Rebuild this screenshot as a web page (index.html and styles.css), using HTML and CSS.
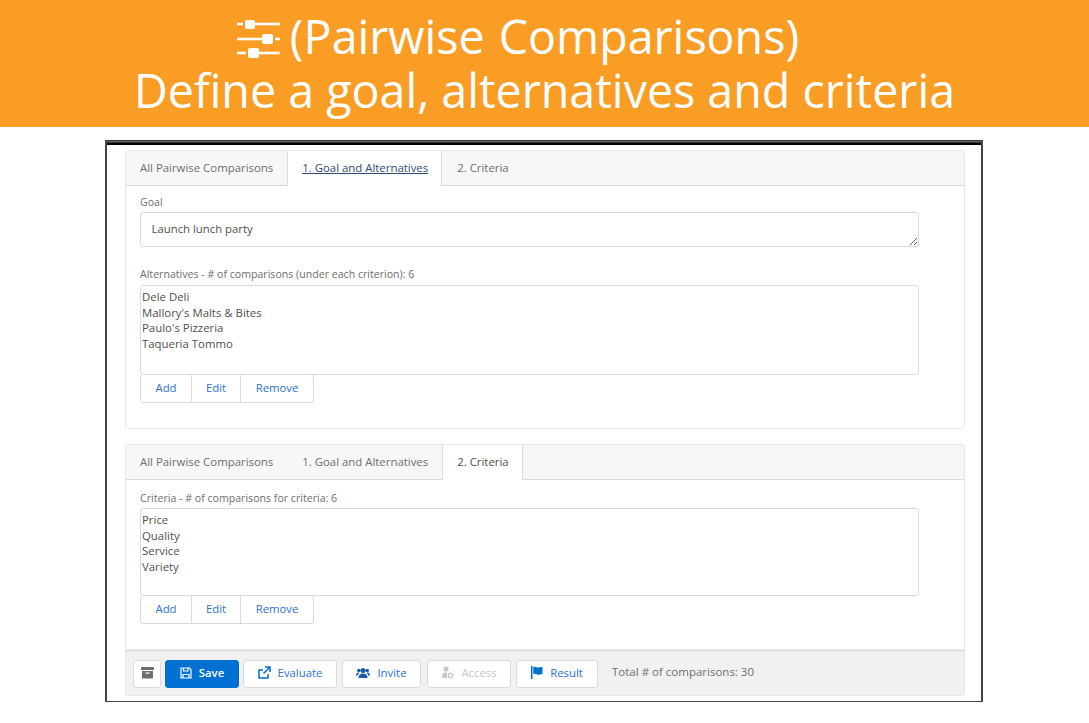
FILE: index.html
```html
<!DOCTYPE html>
<html lang="en">
<head>
<meta charset="utf-8">
<title>Pairwise Comparisons</title>
<link rel="stylesheet" href="styles.css">
</head>
<body>
<header class="banner">
  <div class="banner-line banner-line-first">
    <svg class="banner-icon" viewBox="0 0 44 44" aria-hidden="true">
      <g fill="#fff">
        <rect x="0" y="8.700" width="6" height="2.600"/><rect x="8" y="6" width="10" height="9" rx="2"/><rect x="18" y="8.700" width="25" height="2.600"/>
        <rect x="0" y="23.700" width="25" height="2.600"/><rect x="25" y="20" width="11" height="10" rx="2"/><rect x="38" y="23.700" width="5" height="2.600"/>
        <rect x="0" y="37.700" width="9" height="2.600"/><rect x="11" y="34" width="11" height="10" rx="2"/><rect x="22" y="37.700" width="21" height="2.600"/>
      </g>
    </svg>
    <span class="banner-title">(Pairwise Comparisons)</span>
  </div>
  <div class="banner-line">Define a goal, alternatives and criteria</div>
</header>

<main class="frame">
  <section class="panel panel-first">
    <nav class="tabs">
      <span class="tab">All Pairwise Comparisons</span>
      <span class="tab tab-active tab-link">1. Goal and Alternatives</span>
      <span class="tab">2. Criteria</span>
    </nav>
    <div class="panel-body">
      <label class="field-label label-goal" for="goal">Goal</label>
      <textarea id="goal" class="goal-input" readonly>Launch lunch party</textarea>
      <div class="field-label label-alt">Alternatives - # of comparisons (under each criterion): 6</div>
      <ul class="list list-alt">
        <li>Dele Deli</li>
        <li>Mallory's Malts &amp; Bites</li>
        <li>Paulo's Pizzeria</li>
        <li>Taqueria Tommo</li>
      </ul>
      <div class="btn-group">
        <button class="group-btn btn-add">Add</button>
        <button class="group-btn btn-edit">Edit</button>
        <button class="group-btn btn-remove">Remove</button>
      </div>
    </div>
  </section>

  <section class="panel panel-second">
    <nav class="tabs">
      <span class="tab">All Pairwise Comparisons</span>
      <span class="tab">1. Goal and Alternatives</span>
      <span class="tab tab-active">2. Criteria</span>
    </nav>
    <div class="panel-body panel-body-second">
      <div class="field-label label-crit">Criteria - # of comparisons for criteria: 6</div>
      <ul class="list list-crit">
        <li>Price</li>
        <li>Quality</li>
        <li>Service</li>
        <li>Variety</li>
      </ul>
      <div class="btn-group">
        <button class="group-btn btn-add">Add</button>
        <button class="group-btn btn-edit">Edit</button>
        <button class="group-btn btn-remove">Remove</button>
      </div>
    </div>
    <footer class="toolbar">
      <button class="btn btn-archive" aria-label="Archive">
        <svg width="13" height="13" viewBox="0 0 13 13"><path fill="#706e6b" d="M1 1h11a1 1 0 0 1 1 1v2H0V2a1 1 0 0 1 1-1zM1 5h11v6.500a1 1 0 0 1-1 1H2a1 1 0 0 1-1-1zM4.500 6.500v1.200h4V6.500z"/></svg>
      </button>
      <button class="btn btn-save">
        <svg width="12" height="12" viewBox="0 0 12 12" fill="none" stroke="#fff" stroke-width="1.200"><path d="M1 1h8.500L11 2.500V11H1zM3.500 1v3h4.500V1M3 11V7.500h6V11"/></svg>
        Save
      </button>
      <button class="btn btn-evaluate">
        <svg width="13" height="13" viewBox="0 0 13 13" fill="none" stroke="#0070d2" stroke-width="1.500"><path d="M10 8v4H1V4h4M7 1h5v5M12 1 5.500 7.500"/></svg>
        Evaluate
      </button>
      <button class="btn btn-invite">
        <svg width="14" height="12" viewBox="0 0 14 12"><g fill="#1a5aa8"><circle cx="7" cy="3.500" r="2.500"/><path d="M2.500 11c0-3 1.500-4.500 4.500-4.500s4.500 1.500 4.500 4.500z"/><circle cx="2.800" cy="3.500" r="1.800"/><circle cx="11.200" cy="3.500" r="1.800"/><path d="M0 8.500c0-2 1-3 2.800-3l.7.300C2.500 6.800 2 7.800 1.800 8.500zM14 8.500c0-2-1-3-2.800-3l-.7.300c1 1 1.500 2 1.700 2.700z"/></g></svg>
        Invite
      </button>
      <button class="btn btn-access">
        <svg width="13" height="13" viewBox="0 0 13 13"><g fill="#c9c7c5"><circle cx="5" cy="3" r="2.600"/><path d="M1 12c0-4 1-5.500 4-5.500l1 .3V12z"/></g><circle cx="9.500" cy="9.500" r="2.200" fill="none" stroke="#c9c7c5" stroke-width="1.300"/></svg>
        Access
      </button>
      <button class="btn btn-result">
        <svg width="12" height="13" viewBox="0 0 12 13"><path fill="#0070d2" d="M0 0h1.500v13H0zM2.300 1c2-1 3.700.6 5 .6 1.300 0 2.700-.3 4.200-.8v7c-1.500.6-3 1-4.300 1-1.300 0-3-1.500-4.900-.7z"/></svg>
        Result
      </button>
      <span class="total">Total # of comparisons: 30</span>
    </footer>
  </section>
</main>
</body>
</html>
```
FILE: styles.css
```css
* { box-sizing: border-box; }

html, body { margin: 0; padding: 0; background: #fff; }

body {
  width: 1089px;
  height: 723px;
  overflow: hidden;
  font-family: "Open Sans", "Noto Sans", sans-serif;
  color: #3e3e3c;
}

.banner {
  height: 127px;
  background: #fa9d25;
  color: #fff;
  font-size: 46.6px;
  line-height: 54px;
  padding-top: 9px;
  text-align: center;
}

.banner-line { height: 54px; }

.banner-line-first {
  display: flex;
  justify-content: center;
  align-items: center;
  gap: 9px;
  padding-right: 53px;
}

.banner-title { word-spacing: 2px; }

.banner-icon { width: 44px; height: 44px; }

.frame {
  width: 878px;
  height: 562px;
  margin: 13px 0 0 105px;
  border-style: solid;
  border-color: #444;
  border-width: 0 2px 1px 2px;
  padding: 10px 16px 0 18px;
  background: linear-gradient(#333 0 1px, #666 1px 2px, #333 2px 3px, #000 3px 5px) top / 100% 5px no-repeat;
}

.panel {
  border: 1px solid #e8e8e8;
  border-radius: 3px;
  overflow: hidden;
}

.panel-first { height: 279px; }

.panel-second {
  height: 252px;
  margin-top: 15px;
}

.tabs {
  display: flex;
  height: 35px;
  background: #f7f7f7;
  border-bottom: 1px solid #dddbda;
}

.tab {
  padding: 0 13px 0 14px;
  height: 34px;
  line-height: 34px;
  font-size: 11.4px;
  color: #706e6b;
  white-space: nowrap;
  border-left: 1px solid transparent;
  border-right: 1px solid transparent;
}

.tab:first-child { margin-left: -1px; }

.tab-active {
  height: 35px;
  background: #fff;
  color: #514f4d;
  border-left-color: #dddbda;
  border-right-color: #dddbda;
}

.tab-link { color: #2f4a72; text-decoration: underline; }

.panel-body { padding: 0 14px; }

.panel-body-second { height: 169px; padding-top: 11px; }

.field-label {
  display: block;
  font-size: 10.6px;
  line-height: 14px;
  color: #706e6b;
}

.label-goal { padding-top: 9px; height: 26px; }

.goal-input {
  display: block;
  width: 779px;
  height: 35px;
  padding: 8px 10.500px;
  border: 1px solid #dddbda;
  border-radius: 3px;
  font: 11.35px/15px "Open Sans", "Noto Sans", sans-serif;
  color: #514f4d;
  outline: none;
}

.label-alt { margin-top: 20px; height: 18px; }

.label-crit { height: 17px; }

.list {
  list-style: none;
  width: 779px;
  margin: 0;
  padding: 3px 1px;
  border: 1px solid #dddbda;
  border-radius: 3px;
  font-size: 11.4px;
  line-height: 15.67px;
  color: #514f4d;
}

.list-alt { height: 90px; }

.list-crit { height: 88px; }

.btn-group { display: flex; margin-top: -1px; }

.group-btn {
  height: 29px;
  padding: 0 0 2px;
  background: #fff;
  border: 1px solid #dddbda;
  border-left-width: 0;
  font: 11.35px "Open Sans", "Noto Sans", sans-serif;
  color: #2a73d6;
}

.btn-add {
  width: 52px;
  border-left-width: 1px;
  border-radius: 3px 0 0 3px;
}

.btn-edit { width: 49px; }

.btn-remove {
  width: 73px;
  border-radius: 0 3px 3px 0;
}

.toolbar {
  display: flex;
  align-items: center;
  height: 46px;
  padding: 0 0 0 7px;
  background: #f1f1f1;
  border-top: 3px solid #e3e3e3;
}

.btn {
  display: flex;
  align-items: center;
  justify-content: center;
  gap: 7px;
  height: 28px;
  padding: 0 0 2px;
  background: #fff;
  border: 1px solid #dddbda;
  border-radius: 3px;
  font: 11.35px "Open Sans", "Noto Sans", sans-serif;
  color: #2a73d6;
  margin-right: 4px;
}

.btn-archive { width: 28px; }

.btn-save {
  width: 74px;
  background: #0070d2;
  border-color: #0070d2;
  color: #fff;
  font-weight: 600;
}

.btn-evaluate { width: 94px; margin-right: 5px; }

.btn-invite { width: 79px; margin-right: 6px; }

.btn-access { width: 84px; color: #c9c7c5; margin-right: 5px; }

.btn-result { width: 82px; }

.total {
  margin-left: 10px;
  padding-bottom: 4px;
  font-size: 11.5px;
  color: #706e6b;
}
```
